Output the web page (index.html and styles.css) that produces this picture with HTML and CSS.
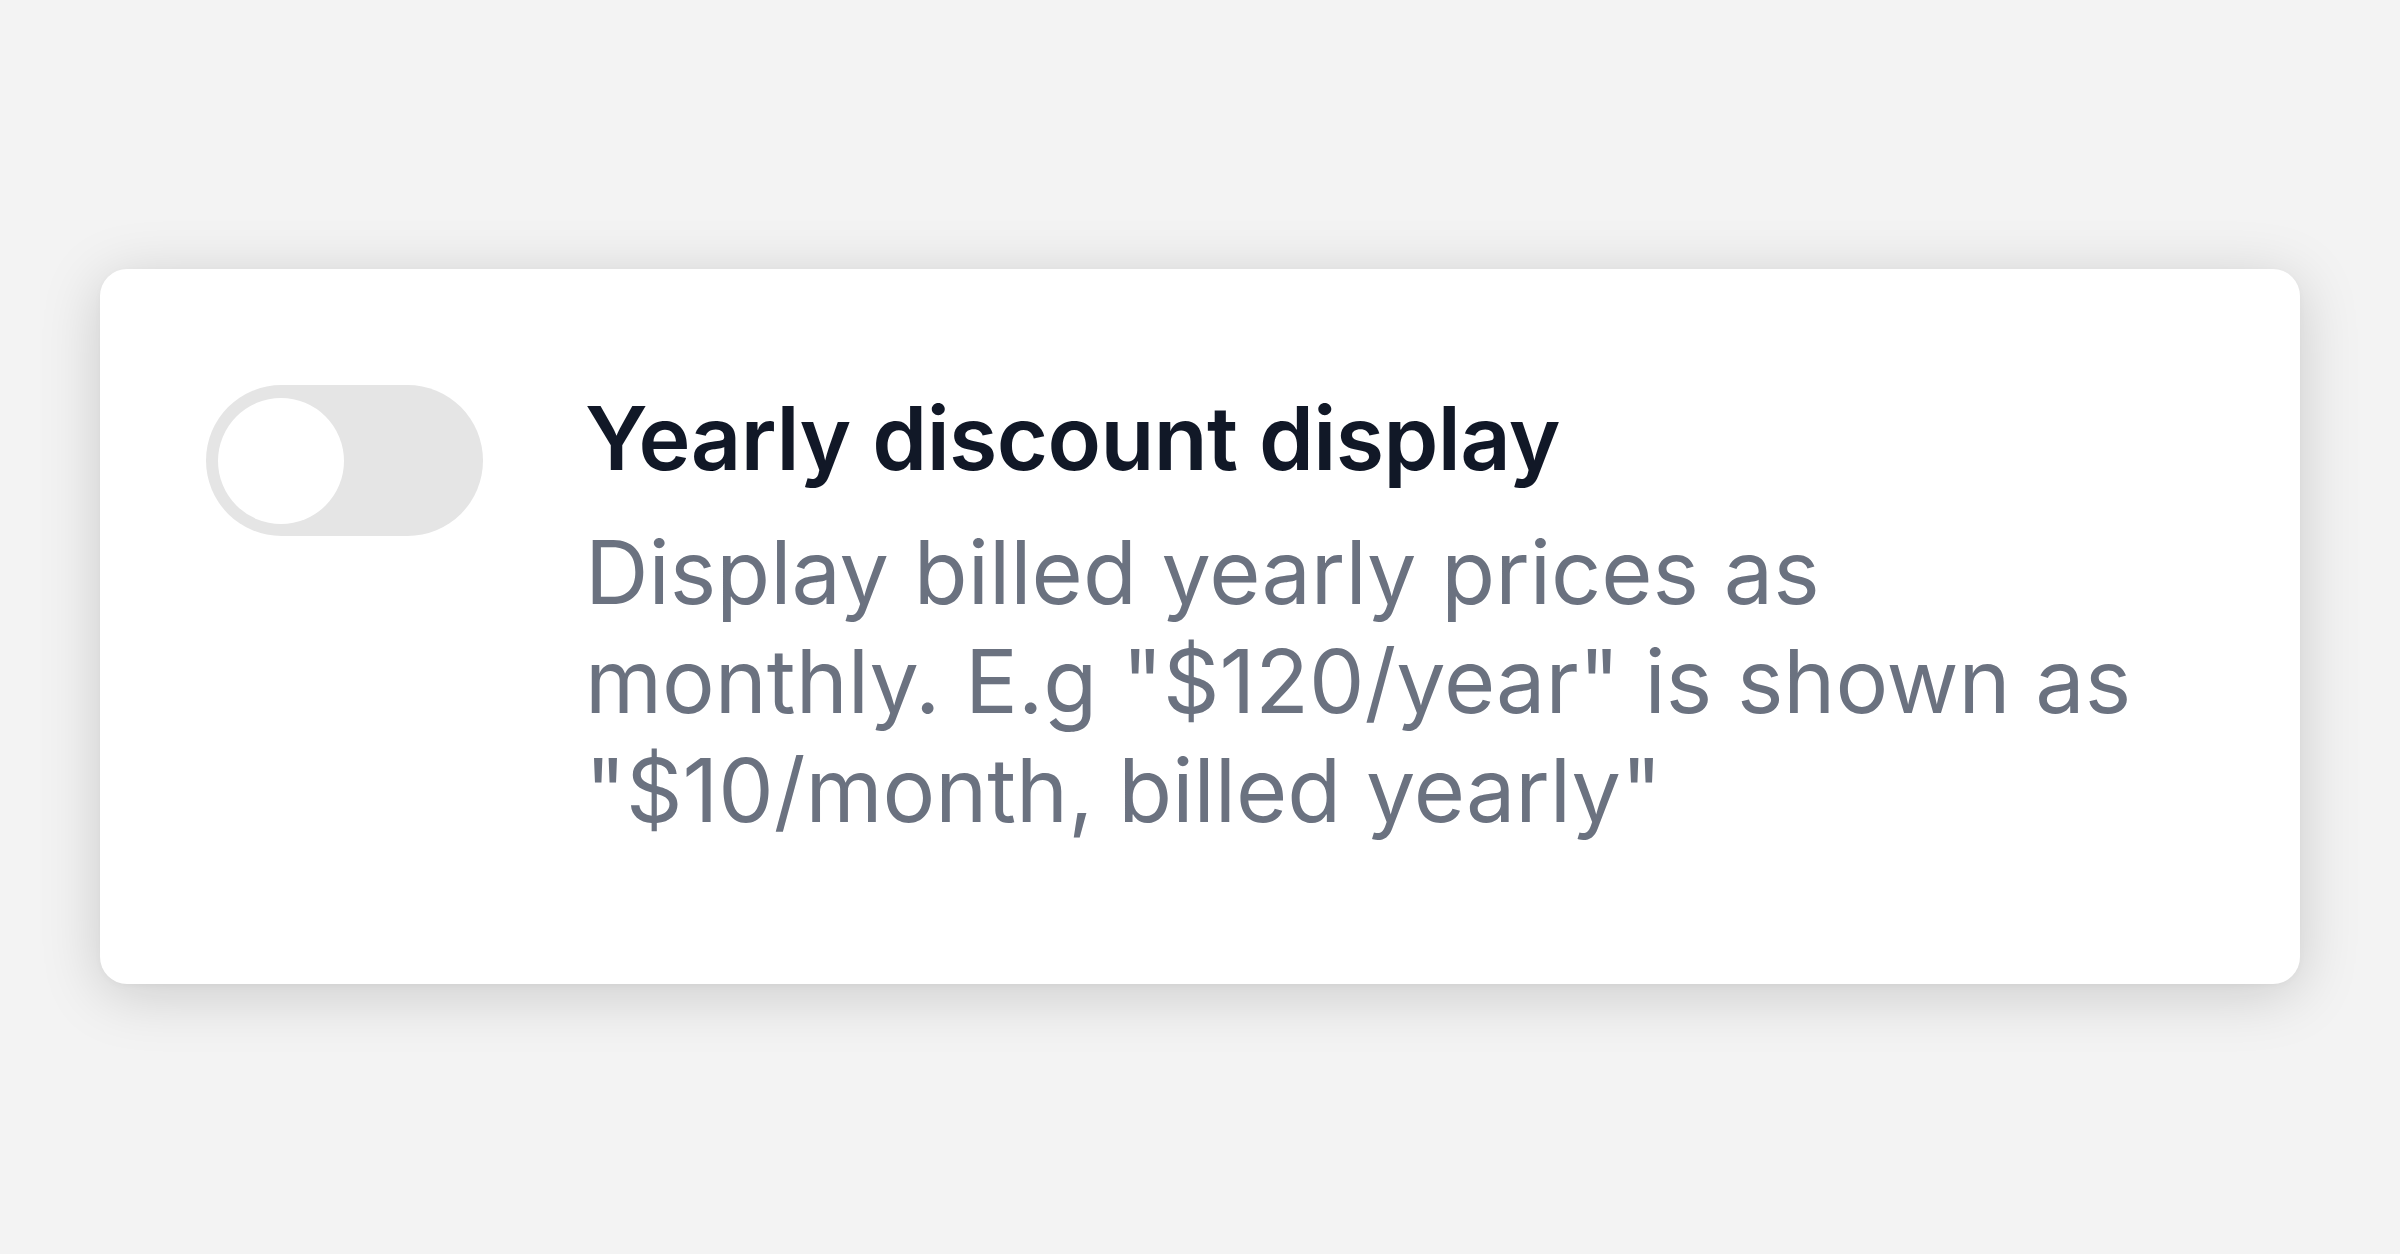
FILE: index.html
```html
<!DOCTYPE html>
<html lang="en">
<head>
<meta charset="utf-8">
<title>Yearly discount display</title>
<link rel="stylesheet" href="styles.css">
</head>
<body>
<main class="page">
  <section class="card">
    <div class="toggle" role="switch" aria-checked="false">
      <span class="knob"></span>
    </div>
    <div class="text">
      <h2 class="title">Yearly discount display</h2>
      <p class="desc">Display billed yearly prices as monthly. E.g "$120/year" is shown as "$10/month, billed yearly"</p>
    </div>
  </section>
</main>
</body>
</html>
```

FILE: styles.css
```css
html, body {
  margin: 0;
  padding: 0;
  background: #f3f3f3;
}

.page {
  padding: 269px 100px 270px 100px;
  font-family: Inter, "Noto Sans", sans-serif;
}

.card {
  width: 2200px;
  height: 715px;
  box-sizing: border-box;
  background: #ffffff;
  border-radius: 27px;
  box-shadow: 0 10px 60px rgba(0, 0, 0, 0.17), 0 2px 6px rgba(0, 0, 0, 0.03);
  padding: 116px 90px 0 106px;
  display: flex;
  align-items: flex-start;
  gap: 102px;
}

.toggle {
  flex: none;
  width: 277px;
  height: 151px;
  border-radius: 76px;
  background: #e5e5e5;
  box-sizing: border-box;
  padding: 13px 12px 12px 12px;
  display: flex;
}

.knob {
  width: 126px;
  height: 126px;
  border-radius: 50%;
  background: #ffffff;
}

.text {
  width: 1570px;
}

.title {
  margin: 0;
  font-size: 88px;
  font-weight: 600;
  line-height: 106px;
  color: #111827;
  letter-spacing: -0.6px;
}

.desc {
  margin: 27px 0 0 0;
  font-size: 88px;
  font-weight: 400;
  line-height: 109px;
  color: #6b7280;
}
```
